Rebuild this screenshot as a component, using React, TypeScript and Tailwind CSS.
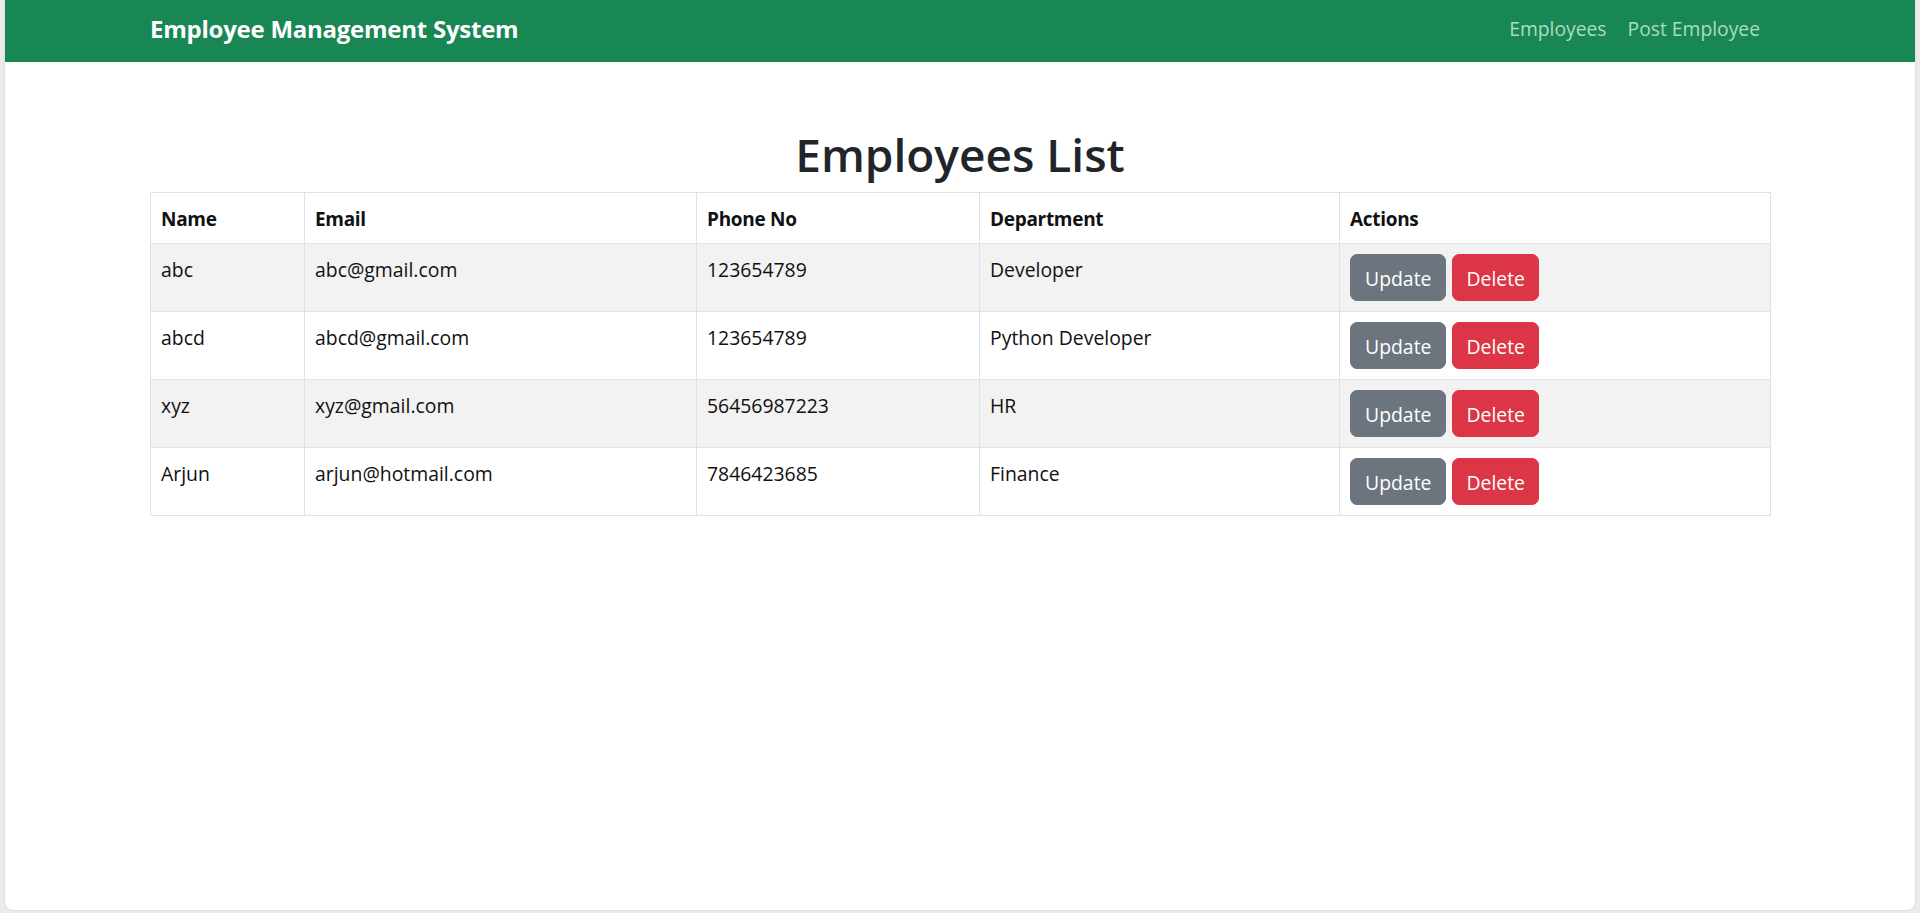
import React from "react";

const rows = [
  { name: "abc", email: "abc@gmail.com", phone: "123654789", dept: "Developer" },
  { name: "abcd", email: "abcd@gmail.com", phone: "123654789", dept: "Python Developer" },
  { name: "xyz", email: "xyz@gmail.com", phone: "56456987223", dept: "HR" },
  { name: "Arjun", email: "arjun@hotmail.com", phone: "7846423685", dept: "Finance" },
];

const font = { fontFamily: '"Segoe UI", "Open Sans", "Liberation Sans", sans-serif' };

export default function App() {
  return (
    <div className="h-[913px] w-full bg-[#ebebeb] px-[5px] pb-[3px]" style={font}>
      <div className="h-[910px] w-full overflow-hidden rounded-b-[8px] bg-white shadow-[0_0_2px_rgba(0,0,0,0.15)]">
        <nav className="flex h-[62px] items-center bg-[#198754]">
          <div className="mx-auto flex w-[1620px] items-center justify-between pb-[4px]">
            <span className="text-[24px] font-bold leading-[30px] tracking-[-0.25px] text-white">
              Employee Management System
            </span>
            <div className="flex items-center">
              <a className="px-[10px] text-[19.3px] leading-[30px] text-[#a9dcc2]">Employees</a>
              <a className="pl-[11px] pr-[10px] text-[19.3px] leading-[30px] text-[#a9dcc2]">Post Employee</a>
            </div>
          </div>
        </nav>
        <div className="mx-auto w-[1620px] pt-[62px]">
          <h1 className="mb-[8px] text-center text-[46px] font-semibold leading-[60px] text-[#212529]">
            Employees List
          </h1>
          <table className="w-full table-fixed border-collapse border border-[#dee2e6] text-[19.4px] leading-[30px] text-[#111]">
            <colgroup>
              <col className="w-[154px]" />
              <col className="w-[392px]" />
              <col className="w-[283px]" />
              <col className="w-[360px]" />
              <col className="w-[431px]" />
            </colgroup>
            <thead>
              <tr className="h-[50px]">
                {["Name", "Email", "Phone No", "Department", "Actions"].map((h) => (
                  <th
                    key={h}
                    className="border border-[#dee2e6] px-[10px] pt-[11px] pb-[9px] text-left align-top text-[19px] font-bold tracking-[-0.3px]"
                  >
                    {h}
                  </th>
                ))}
              </tr>
            </thead>
            <tbody>
              {rows.map((r, i) => (
                <tr key={i} className={i % 2 === 0 ? "bg-[#f2f2f2]" : "bg-white"}>
                  <td className="border border-[#dee2e6] px-[10px] pt-[11px] pb-[9px] align-top">{r.name}</td>
                  <td className="border border-[#dee2e6] px-[10px] pt-[11px] pb-[9px] align-top">{r.email}</td>
                  <td className="border border-[#dee2e6] px-[10px] pt-[11px] pb-[9px] align-top">{r.phone}</td>
                  <td className="border border-[#dee2e6] px-[10px] pt-[11px] pb-[9px] align-top">{r.dept}</td>
                  <td className="border border-[#dee2e6] px-[10px] py-[10px] align-top">
                    <div className="flex gap-[6px]">
                      <button className="h-[47px] rounded-[7px] border border-[#6c757d] bg-[#6c757d] px-[14px] pt-[2px] text-[19.4px] leading-[30px] text-white">
                        Update
                      </button>
                      <button className="h-[47px] rounded-[7px] border border-[#dc3545] bg-[#dc3545] px-[13px] pt-[2px] text-[19.4px] leading-[30px] text-white">
                        Delete
                      </button>
                    </div>
                  </td>
                </tr>
              ))}
            </tbody>
          </table>
        </div>
      </div>
    </div>
  );
}
